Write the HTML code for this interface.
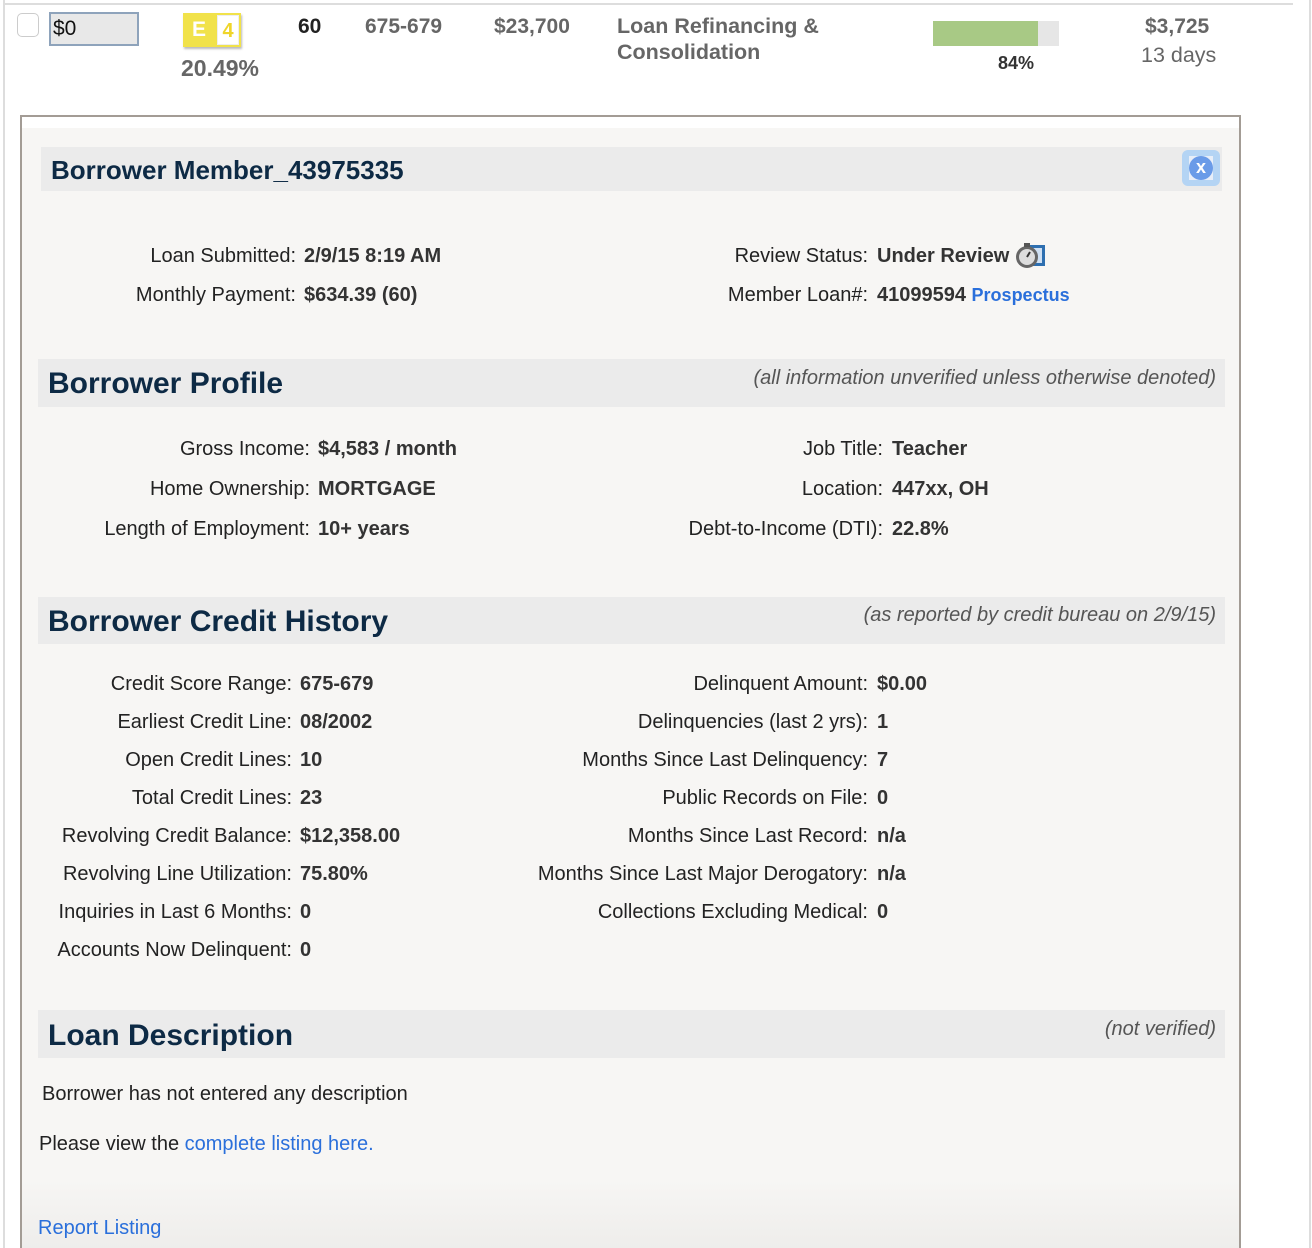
<!DOCTYPE html>
<html style="overflow:hidden;height:1248px"><head><meta charset="utf-8">
<style>
*{margin:0;padding:0;box-sizing:border-box}
body{width:1312px;height:1248px;overflow:hidden;background:#fff;font-family:"Liberation Sans",Arial,sans-serif;position:relative;color:#222}
.a{position:absolute;white-space:nowrap}
.g{color:#666;font-weight:bold;font-size:21px}
.bar{position:absolute;background:#ebebeb}
.h{position:absolute;font-weight:bold;color:#0d2a45;font-size:30px}
.note{position:absolute;font-style:italic;color:#555;font-size:20px;right:96px}
.r{position:absolute;font-size:20px;line-height:22px;height:22px;white-space:nowrap}
.r .l{position:absolute;right:0;text-align:right;color:#222}
.r .v{position:absolute;left:8px;font-weight:bold;color:#333}
a{color:#2a6fdb;text-decoration:none}
</style></head><body>
<div class="a" style="left:3px;top:0;width:2px;height:1248px;background:#ddd"></div>
<div class="a" style="left:3px;top:3px;width:1290px;height:2px;background:#ddd"></div>
<div class="a" style="left:1309px;top:0;width:2px;height:1248px;background:#ddd"></div>

<div class="a" style="left:17px;top:13px;width:22px;height:24px;border:1px solid #ccc;border-radius:5px;background:#fff"></div>
<div class="a" style="left:49px;top:12px;width:90px;height:34px;border:2px solid #8ea3bb;background:#e8e8e8;font-size:21px;padding:3px 0 0 2px;color:#111">$0</div>
<div class="a" style="left:183px;top:13px;width:58px;height:34px;background:#f1e24a;box-shadow:1px 2px 2px #bbb"></div>
<div class="a" style="left:192px;top:18px;color:#fff;font-weight:bold;font-size:21px">E</div>
<div class="a" style="left:217px;top:15px;width:22px;height:30px;background:#fff;border:1px solid #eee;color:#efd52a;font-weight:bold;font-size:20px;text-align:center;line-height:30px">4</div>
<div class="a g" style="left:181px;top:55px;font-size:23px">20.49%</div>
<div class="a" style="left:298px;top:15px;font-weight:bold;font-size:21px;color:#222">60</div>
<div class="a g" style="left:365px;top:15px">675-679</div>
<div class="a g" style="left:494px;top:15px">$23,700</div>
<div class="a g" style="left:617px;top:13px;line-height:26px;font-size:21.5px">Loan Refinancing &amp;<br>Consolidation</div>
<div class="a" style="left:933px;top:21px;width:126px;height:25px;background:#e6e6e6"></div>
<div class="a" style="left:933px;top:21px;width:105px;height:25px;background:#a8c985"></div>
<div class="a" style="left:998px;top:53px;font-weight:bold;font-size:18px;color:#333">84%</div>
<div class="a g" style="left:1145px;top:15px">$3,725</div>
<div class="a" style="left:1141px;top:43px;font-size:21.5px;color:#666">13 days</div>

<div class="a" style="left:20px;top:115px;width:1221px;height:1133px;border:2px solid #a39c95;border-bottom:none;background:#f7f6f4"></div>
<div class="a" style="left:22px;top:117px;width:1217px;height:11px;background:#fff"></div>
<div class="a" style="left:22px;top:1180px;width:1217px;height:68px;background:linear-gradient(#f7f6f4,#eeedeb)"></div>

<div class="bar" style="left:41px;top:147px;width:1181px;height:44px"></div>
<div class="h" style="left:51px;top:155px;font-size:26px">Borrower Member_43975335</div>
<div class="a" style="left:1182px;top:150px;width:38px;height:36px;background:#b4d4f4;border-radius:6px"></div>
<div class="a" style="left:1189px;top:156px;width:24px;height:24px;background:#e8eef8"></div>
<div class="a" style="left:1189px;top:156px;width:24px;height:24px;border-radius:50%;background:#6a9be8;color:#fff;font-weight:bold;font-size:18px;text-align:center;line-height:23px">x</div>

<div class="r" style="left:0;top:245px;width:296px"><span class="l">Loan Submitted:</span></div>
<div class="r" style="left:296px;top:245px"><span class="v">2/9/15 8:19 AM</span></div>
<div class="r" style="left:0;top:284px;width:296px"><span class="l">Monthly Payment:</span></div>
<div class="r" style="left:296px;top:284px"><span class="v">$634.39 (60)</span></div>
<div class="r" style="left:0;top:245px;width:868px"><span class="l">Review Status:</span></div>
<div class="r" style="left:869px;top:245px"><span class="v">Under Review</span></div>
<svg class="a" style="left:1014px;top:241px" width="32" height="30" viewBox="0 0 32 30"><rect x="11" y="4" width="20" height="21" fill="#2e6fb0"/><rect x="14" y="7" width="14" height="15" fill="#cfe0f3"/><circle cx="13" cy="16" r="11" fill="#666"/><circle cx="13" cy="16" r="8" fill="#ddd"/><rect x="10" y="2" width="6" height="4" fill="#555"/><path d="M13 16 L16 11" stroke="#333" stroke-width="2"/></svg>
<div class="r" style="left:0;top:284px;width:868px"><span class="l">Member Loan#:</span></div>
<div class="r" style="left:869px;top:284px"><span class="v">41099594 <a style="font-size:18px;color:#2a6fdb">Prospectus</a></span></div>

<div class="bar" style="left:38px;top:359px;width:1187px;height:48px"></div>
<div class="h" style="left:48px;top:367px">Borrower Profile</div>
<div class="note" style="top:367px">(all information unverified unless otherwise denoted)</div>
<div class="r" style="left:0;top:438px;width:310px"><span class="l">Gross Income:</span></div>
<div class="r" style="left:310px;top:438px"><span class="v">$4,583 / month</span></div>
<div class="r" style="left:0;top:478px;width:310px"><span class="l">Home Ownership:</span></div>
<div class="r" style="left:310px;top:478px"><span class="v">MORTGAGE</span></div>
<div class="r" style="left:0;top:518px;width:310px"><span class="l">Length of Employment:</span></div>
<div class="r" style="left:310px;top:518px"><span class="v">10+ years</span></div>
<div class="r" style="left:0;top:438px;width:883px"><span class="l">Job Title:</span></div>
<div class="r" style="left:884px;top:438px"><span class="v">Teacher</span></div>
<div class="r" style="left:0;top:478px;width:883px"><span class="l">Location:</span></div>
<div class="r" style="left:884px;top:478px"><span class="v">447xx, OH</span></div>
<div class="r" style="left:0;top:518px;width:883px"><span class="l">Debt-to-Income (DTI):</span></div>
<div class="r" style="left:884px;top:518px"><span class="v">22.8%</span></div>

<div class="bar" style="left:38px;top:597px;width:1187px;height:47px"></div>
<div class="h" style="left:48px;top:605px">Borrower Credit History</div>
<div class="note" style="top:604px">(as reported by credit bureau on 2/9/15)</div>

<div class="r" style="left:0;top:673px;width:292px"><span class="l">Credit Score Range:</span></div>
<div class="r" style="left:292px;top:673px"><span class="v">675-679</span></div>
<div class="r" style="left:0;top:711px;width:292px"><span class="l">Earliest Credit Line:</span></div>
<div class="r" style="left:292px;top:711px"><span class="v">08/2002</span></div>
<div class="r" style="left:0;top:749px;width:292px"><span class="l">Open Credit Lines:</span></div>
<div class="r" style="left:292px;top:749px"><span class="v">10</span></div>
<div class="r" style="left:0;top:787px;width:292px"><span class="l">Total Credit Lines:</span></div>
<div class="r" style="left:292px;top:787px"><span class="v">23</span></div>
<div class="r" style="left:0;top:825px;width:292px"><span class="l">Revolving Credit Balance:</span></div>
<div class="r" style="left:292px;top:825px"><span class="v">$12,358.00</span></div>
<div class="r" style="left:0;top:863px;width:292px"><span class="l">Revolving Line Utilization:</span></div>
<div class="r" style="left:292px;top:863px"><span class="v">75.80%</span></div>
<div class="r" style="left:0;top:901px;width:292px"><span class="l">Inquiries in Last 6 Months:</span></div>
<div class="r" style="left:292px;top:901px"><span class="v">0</span></div>
<div class="r" style="left:0;top:939px;width:292px"><span class="l">Accounts Now Delinquent:</span></div>
<div class="r" style="left:292px;top:939px"><span class="v">0</span></div>

<div class="r" style="left:0;top:673px;width:868px"><span class="l">Delinquent Amount:</span></div>
<div class="r" style="left:869px;top:673px"><span class="v">$0.00</span></div>
<div class="r" style="left:0;top:711px;width:868px"><span class="l">Delinquencies (last 2 yrs):</span></div>
<div class="r" style="left:869px;top:711px"><span class="v">1</span></div>
<div class="r" style="left:0;top:749px;width:868px"><span class="l">Months Since Last Delinquency:</span></div>
<div class="r" style="left:869px;top:749px"><span class="v">7</span></div>
<div class="r" style="left:0;top:787px;width:868px"><span class="l">Public Records on File:</span></div>
<div class="r" style="left:869px;top:787px"><span class="v">0</span></div>
<div class="r" style="left:0;top:825px;width:868px"><span class="l">Months Since Last Record:</span></div>
<div class="r" style="left:869px;top:825px"><span class="v">n/a</span></div>
<div class="r" style="left:0;top:863px;width:868px"><span class="l">Months Since Last Major Derogatory:</span></div>
<div class="r" style="left:869px;top:863px"><span class="v">n/a</span></div>
<div class="r" style="left:0;top:901px;width:868px"><span class="l">Collections Excluding Medical:</span></div>
<div class="r" style="left:869px;top:901px"><span class="v">0</span></div>

<div class="bar" style="left:38px;top:1010px;width:1187px;height:48px"></div>
<div class="h" style="left:48px;top:1019px">Loan Description</div>
<div class="note" style="top:1018px">(not verified)</div>
<div class="a" style="left:42px;top:1083px;font-size:20px;color:#222">Borrower has not entered any description</div>
<div class="a" style="left:39px;top:1133px;font-size:20px;color:#222">Please view the <a>complete listing here.</a></div>
<div class="a" style="left:38px;top:1217px;font-size:20px"><a>Report Listing</a></div>
</body></html>
